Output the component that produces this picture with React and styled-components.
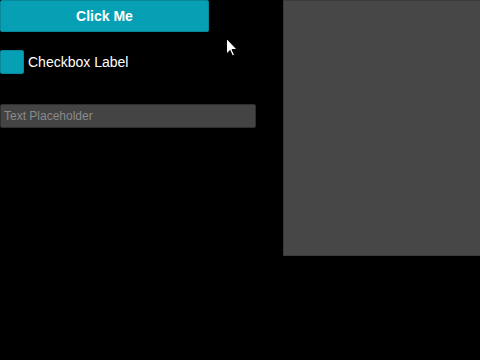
import * as React from "react";
import styled, { createGlobalStyle } from "styled-components";

function App() {
  const [checked, setChecked] = React.useState(false);

  return (
    <React.Fragment>
      <GlobalStyle />
      <Screen>
        <Controls>
          <PrimaryButton type="button">Click Me</PrimaryButton>
          <CheckRow onClick={() => setChecked(!checked)}>
            <CheckBox $checked={checked} />
            <CheckLabel>Checkbox Label</CheckLabel>
          </CheckRow>
          <TextField placeholder="Text Placeholder" />
        </Controls>
        <Panel />
        <Pointer />
      </Screen>
    </React.Fragment>
  );
}

function Pointer() {
  return (
    <Cursor width="13" height="19" viewBox="0 0 13 19">
      <path
        d="M0.5 0.5 L0.5 16 L4 12.5 L6.5 18 L8.5 17 L6 11.5 L11 11.5 Z"
        fill="#ffffff"
        stroke="#000000"
        strokeWidth="1"
      />
    </Cursor>
  );
}

/* =============================== */
// styles

const GlobalStyle = createGlobalStyle`
  html, body {
    margin: 0;
    padding: 0;
    background: #000;
    font-family: "Liberation Sans", Arial, sans-serif;
  }
`;

const Screen = styled.div`
  position: relative;
  width: 480px;
  height: 360px;
  display: grid;
  grid-template-columns: 256px 1fr;
  column-gap: 27px;
  align-items: start;
  overflow: hidden;
`;

const Controls = styled.div`
  display: flex;
  flex-direction: column;
  align-items: flex-start;
`;

const PrimaryButton = styled.button`
  width: 209px;
  height: 32px;
  margin: 0;
  padding: 0;
  background: #079fb3;
  border: solid 1px #06899a;
  border-radius: 2px;
  color: #fff;
  font-family: "Liberation Sans", Arial, sans-serif;
  font-size: 14px;
  font-weight: 700;
  cursor: pointer;
`;

const CheckRow = styled.label`
  display: flex;
  align-items: center;
  gap: 4px;
  margin-top: 18px;
  cursor: pointer;
`;

const CheckBox = styled.span`
  width: 22px;
  height: 22px;
  background: ${(p) => (p.$checked ? "#0b8fa0" : "#079fb3")};
  border: solid 1px #06899a;
  border-radius: 2px;
`;

const CheckLabel = styled.span`
  color: #fff;
  font-size: 14px;
`;

const TextField = styled.input`
  box-sizing: border-box;
  width: 256px;
  height: 24px;
  margin-top: 30px;
  padding: 0 3px;
  background: #444;
  border: solid 1px #2e2e2e;
  border-radius: 2px;
  color: #ddd;
  font-family: "Liberation Sans", Arial, sans-serif;
  font-size: 12px;
  outline: none;

  &::placeholder {
    color: #8a8a8a;
  }
`;

const Panel = styled.div`
  height: 256px;
  background: #474747;
  border: solid 1px #3a3a3a;
  border-right: none;
  box-sizing: border-box;
`;

const Cursor = styled.svg`
  position: absolute;
  left: 226px;
  top: 38px;
`;

export default App;
